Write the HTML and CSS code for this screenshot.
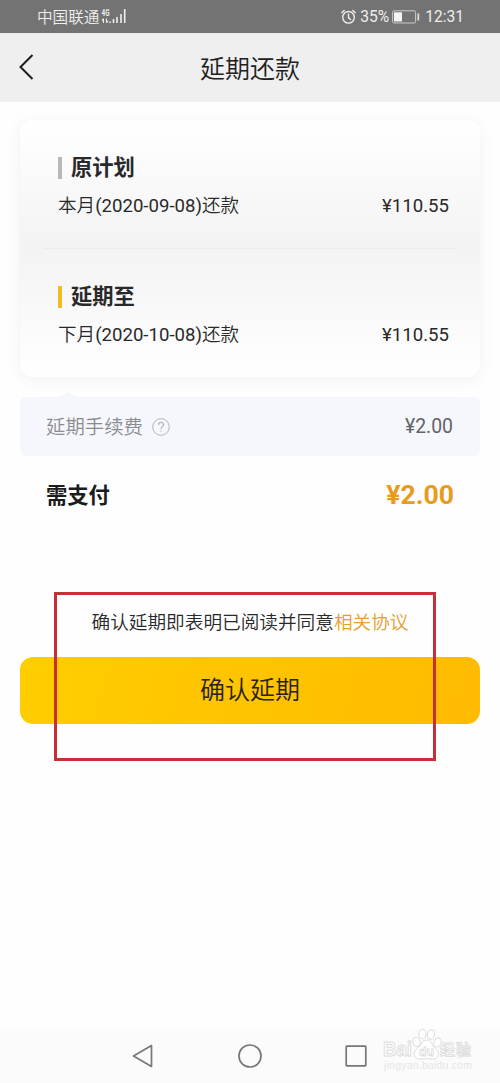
FILE: index.html
```html
<!DOCTYPE html>
<html lang="zh-CN">
<head>
<meta charset="utf-8">
<title>延期还款</title>
<link rel="stylesheet" href="styles.css">
</head>
<body>
<div class="screen">
  <div class="status">
    <div class="status-left">
      <span class="carrier">中国联通</span>
      <svg class="signal" width="25" height="18" viewBox="0 0 25 18">
        <text class="net" x="0.5" y="7.5" textLength="8" lengthAdjust="spacingAndGlyphs">4G</text>
        <path d="M2.500 15v-4M1 12.500l1.500-1.800M5.500 10.500v4M7 13l-1.500 1.800" fill="none" stroke="#eee" stroke-width="1.1"/>
        <path d="M9 15v-1.500M12.500 15v-4M16 15V9M20 15V6M23.700 15V1" fill="none" stroke="#eee" stroke-width="1.6"/>
      </svg>
    </div>
    <div class="status-right">
      <svg class="alarm" width="16" height="16" viewBox="0 0 16 16" fill="none" stroke="#eee" stroke-width="1.4" stroke-linecap="round">
        <circle cx="7.5" cy="8.3" r="5.8"/>
        <path d="M7.5 5v3.6l2 2M.8 3.800l2.400-2.400M14.200 3.800l-2.400-2.400"/>
      </svg>
      <span class="percent">35%</span>
      <svg class="battery" width="28" height="14" viewBox="0 0 28 14">
        <rect x=".6" y=".8" width="23" height="12.2" rx="1.5" fill="none" stroke="#ccc" stroke-width="1"/>
        <rect x="2" y="2.3" width="8" height="9.2" fill="#f4f4f4"/>
        <path d="M26.3 3.5v7" stroke="#ddd" stroke-width="1.8"/>
      </svg>
      <span class="clock">12:31</span>
    </div>
  </div>
  <header class="header">
    <svg class="back" width="18" height="28" viewBox="0 0 18 28"><path d="M14.5 2L2.5 14l12 12" fill="none" stroke="#1c1c1c" stroke-width="2"/></svg>
    <h1 class="title">延期还款</h1>
  </header>
  <main class="main">
    <section class="card">
      <div class="plan">
        <h2 class="plan-title">原计划</h2>
        <div class="row"><span><span class="cjk">本月</span>(2020-09-08)<span class="cjk">还款</span></span><span>¥110.55</span></div>
      </div>
      <div class="plan plan-next">
        <h2 class="plan-title">延期至</h2>
        <div class="row"><span><span class="cjk">下月</span>(2020-10-08)<span class="cjk">还款</span></span><span>¥110.55</span></div>
      </div>
    </section>
    <div class="fee">
      <span class="fee-label">延期手续费</span>
      <svg class="help" width="18" height="18" viewBox="0 0 18 18" fill="none" stroke="#b2b4b9" stroke-width="1">
        <circle cx="9" cy="9" r="8.3"/>
        <path d="M6.500 7c0-3.600 5.100-3.400 5.100-.4 0 1.700-2.500 2-2.500 4.300M9.100 12.300v1.300" stroke-width="1.2"/>
      </svg>
      <span class="fee-value">¥2.00</span>
    </div>
    <div class="total"><span>需支付</span><span class="total-value">¥2.00</span></div>
    <p class="agree">确认延期即表明已阅读并同意<a class="link">相关协议</a></p>
    <button class="confirm">确认延期</button>
  </main>
  <nav class="nav">
    <svg width="22" height="26" viewBox="0 0 22 26"><path d="M19.5 2.5v21L1.5 13z" fill="none" stroke="#777" stroke-width="1.7" stroke-linejoin="round"/></svg>
    <svg width="26" height="26" viewBox="0 0 26 26"><circle cx="13" cy="13" r="11" fill="none" stroke="#777" stroke-width="1.7"/></svg>
    <svg width="22" height="26" viewBox="0 0 22 26"><rect x="1.2" y="3.2" width="19.6" height="19.6" rx=".5" fill="none" stroke="#777" stroke-width="1.7"/></svg>
  </nav>
  <div class="marker"></div>
  <svg class="watermark" width="96" height="46" viewBox="0 0 96 46">
    <g fill="#fff" stroke="#dcdcdc" stroke-width="1">
      <ellipse cx="35.5" cy="15" rx="3.6" ry="4.6" transform="rotate(-15 35.5 15)"/>
      <ellipse cx="41.5" cy="7" rx="3.6" ry="4.8"/>
      <ellipse cx="50" cy="7.5" rx="3.6" ry="4.8" transform="rotate(12 50 7.5)"/>
      <ellipse cx="56.500" cy="15.500" rx="3.500" ry="4.600" transform="rotate(20 56.5 15.5)"/>
      <path d="M45.500 13c4.500 0 5 4.500 8 7.500s4.500 4.500 3.500 8-4.500 4-7 3.500-6-.5-8.500 0-7 .5-8-3.500 1-5 4-8 4-7.500 8-7.500z"/>
      <text class="wm-brand" x="2" y="29" textLength="29" lengthAdjust="spacingAndGlyphs">Bai</text>
      <text class="wm-du" x="38" y="29" textLength="15" lengthAdjust="spacingAndGlyphs">du</text>
      <text class="wm-cn" x="59" y="28" textLength="31">经验</text>
    </g>
    <text class="wm-url" x="3" y="42" textLength="88">jingyan.baidu.com</text>
  </svg>
</div>
</body>
</html>
```
FILE: styles.css
```css
* { box-sizing: border-box; }
body {
  margin: 0;
  background: #fefefe;
  color: #292929;
  font-family: Roboto, "Noto Sans CJK SC", sans-serif;
  font-weight: 400;
}
.screen {
  position: relative;
  display: flex;
  flex-direction: column;
  width: 500px;
  height: 1083px;
  overflow: hidden;
}
.cjk, .carrier, .title, .fee-label, .agree, .confirm {
  font-family: "Noto Sans CJK SC DemiLight", "Noto Sans CJK SC", sans-serif;
  font-weight: 350;
}
.cjk { line-height: 1; }
.status {
  display: flex;
  justify-content: space-between;
  align-items: center;
  height: 33px;
  padding: 0 36px 0 37px;
  background: #737373;
  color: #eee;
  font-size: 15.6px;
  line-height: 33px;
}
.status-left, .status-right { display: flex; align-items: center; height: 33px; }
.signal { margin: 0 0 0 2px; }
.net { fill: #eee; font-size: 9px; font-weight: 700; }
.alarm { margin-right: 3px; }
.percent { width: 30px; padding-top: 2px; }
.clock { padding-top: 2px; }
.battery { margin: 0 5px 0 2px; }
.header {
  display: grid;
  grid-template-columns: 56px 1fr 56px;
  align-items: center;
  height: 69px;
  background: #efefef;
  border-bottom: 1px solid #f4f4f4;
}
.back { margin-left: 18px; }
.title {
  margin: 0;
  padding-top: 1px;
  color: #202020;
  font-size: 25px;
  line-height: 65px;
  text-align: center;
}
.main { flex: 1; padding: 18px 20px 0; }
.card {
  height: 257px;
  padding: 0 31px 0 38px;
  border-radius: 13px;
  background: linear-gradient(#fff 0%, #f3f3f3 50%, #fff 100%);
  box-shadow: 0 3px 18px rgba(0, 0, 0, .055);
}
.plan { height: 128px; padding-top: 33px; }
.plan-next {
  height: 129px;
  background: linear-gradient(#ebebeb, #ebebeb) 0 0 / 100% 1px no-repeat;
  margin: 0 -8px 0 -14px;
  padding: 34px 8px 0 14px;
}
.plan-title {
  display: flex;
  align-items: center;
  margin: 0;
  font-size: 21.300px;
  line-height: 30px;
  font-weight: 700;
}
.plan-title::before {
  content: "";
  width: 4px;
  height: 22px;
  margin-right: 9px;
  background: #b8b8b8;
}
.plan-next .plan-title::before { background: #edbd22; }
.row {
  display: flex;
  justify-content: space-between;
  margin-top: 9px;
  font-size: 18.600px;
  line-height: 28px;
}
.fee {
  position: relative;
  display: flex;
  align-items: center;
  height: 59px;
  margin-top: 20px;
  padding: 0 27px 0 26px;
  border-radius: 6px;
  background: #f6f7fc;
  color: #8b8c8e;
  font-size: 19.400px;
}
.fee-label { padding-bottom: 2px; }
.fee::before {
  content: "";
  position: absolute;
  left: 39px;
  top: -5px;
  width: 18px;
  height: 5px;
  background: #f6f7fc;
  clip-path: polygon(0 100%, 50% 0, 100% 100%);
}
.help { margin-left: 9px; }
.fee-value { margin-left: auto; color: #626367; }
.total {
  display: flex;
  align-items: center;
  justify-content: space-between;
  height: 78px;
  padding: 0 26px 3px;
  color: #1c1c1c;
  font-size: 21.300px;
  font-weight: 700;
}
.total-value { padding-top: 1px; color: #e99b1c; font-size: 26.600px; }
.agree {
  margin: 72px 0 21px;
  font-size: 18.650px;
  line-height: 30px;
  text-align: center;
}
.link { color: #e3a12b; }
.confirm {
  display: block;
  width: 460px;
  height: 67px;
  padding: 0 0 5px;
  border: 0;
  border-radius: 13px;
  background: linear-gradient(105deg, #ffce00, #ffc300 50%, #ffbb00);
  color: #292318;
  font-size: 25px;
}
.nav {
  display: flex;
  align-items: center;
  height: 54px;
  padding: 0 133px 0 132px;
  justify-content: space-between;
  background: #fbfbfb;
}
.marker {
  position: absolute;
  left: 54px;
  top: 592px;
  width: 382px;
  height: 169px;
  border: 3px solid #c52f36;
}
.watermark { position: absolute; left: 381px; top: 1027px; }
.wm-brand { font: 700 20px "Liberation Sans", sans-serif; }
.wm-du { font: 700 13px "Liberation Sans", sans-serif; stroke-width: .8px; }
.wm-cn { font: 700 15px "Noto Sans CJK SC", sans-serif; stroke-width: .8px; }
.wm-url { fill: #e6e6e6; font: 10.500px "Liberation Sans", sans-serif; }
```
